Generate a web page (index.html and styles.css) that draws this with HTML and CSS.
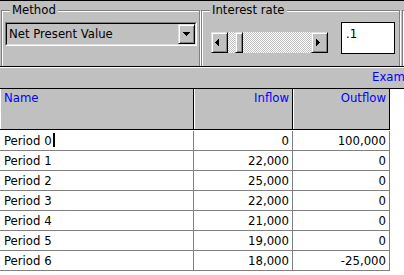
FILE: index.html
```html
<!DOCTYPE html>
<html>
<head>
<meta charset="utf-8">
<link rel="stylesheet" href="styles.css">
</head>
<body>
<div class="top">
  <div class="group g1">
    <span class="legend">Method</span>
    <div class="combo">
      <div class="combo-in">
        <span class="combo-text">Net Present Value</span>
        <span class="btn drop"><svg width="7" height="4" viewBox="0 0 7 4"><path d="M0 0h7v1h-1v1h-1v1h-1v1h-1v-1h-1v-1h-1v-1h-1z"/></svg></span>
      </div>
    </div>
  </div>
  <div class="group g2">
    <span class="legend">Interest rate</span>
    <div class="sb">
      <span class="btn sb-btn sb-left"><svg width="4" height="7" viewBox="0 0 4 7"><path d="M3 0h1v7h-1v-1h-1v-1h-1v-1h-1v-1h1v-1h1v-1h1z"/></svg></span>
      <div class="track"><span class="btn thumb"></span></div>
      <span class="btn sb-btn sb-right"><svg width="4" height="7" viewBox="0 0 4 7"><path d="M0 0h1v1h1v1h1v1h1v1h-1v1h-1v1h-1v1h-1z"/></svg></span>
    </div>
    <div class="tb">.1</div>
  </div>
  <div class="group g3"></div>
</div>
<div class="bar">Example</div>
<div class="grid">
  <div class="hdr">
    <div class="hc w1">Name</div>
    <div class="hc w2 r">Inflow</div>
    <div class="hc w3 r">Outflow</div>
  </div>
  <div class="rows">
    <div class="row"><div class="c w1">Period 0<span class="caret"></span></div><div class="c w2 r">0</div><div class="c w3 r">100,000</div></div>
    <div class="row"><div class="c w1">Period 1</div><div class="c w2 r">22,000</div><div class="c w3 r">0</div></div>
    <div class="row"><div class="c w1">Period 2</div><div class="c w2 r">25,000</div><div class="c w3 r">0</div></div>
    <div class="row"><div class="c w1">Period 3</div><div class="c w2 r">22,000</div><div class="c w3 r">0</div></div>
    <div class="row"><div class="c w1">Period 4</div><div class="c w2 r">21,000</div><div class="c w3 r">0</div></div>
    <div class="row"><div class="c w1">Period 5</div><div class="c w2 r">19,000</div><div class="c w3 r">0</div></div>
    <div class="row"><div class="c w1">Period 6</div><div class="c w2 r">18,000</div><div class="c w3 r">-25,000</div></div>
  </div>
</div>
</body>
</html>
```
FILE: styles.css
```css
* { box-sizing: border-box; }
html, body { margin: 0; padding: 0; }
body {
  width: 404px;
  height: 275px;
  overflow: hidden;
  background: #fff;
  font-family: "DejaVu Sans Condensed", "Liberation Sans", Arial, sans-serif;
  font-size: 13px;
  line-height: 16px;
  color: #000;
}

.top {
  height: 66px;
  background: #c0c0c0;
  border-top: 1px solid #000;
  display: flex;
  align-items: flex-start;
  padding: 9px 0 0 1px;
  overflow: hidden;
}

.group {
  position: relative;
  flex: none;
  height: 80px;
  border: 1px solid #808080;
  box-shadow: inset 1px 1px #fff, 1px 1px #fff;
}

.legend {
  position: absolute;
  left: 8px;
  top: -9px;
  padding: 0 2px;
  background: #c0c0c0;
  white-space: nowrap;
}

.g1 { width: 199px; padding: 11px 0 0 3px; }
.g2 { width: 199px; margin-left: 1px; padding: 0 0 0 9px; display: flex; align-items: flex-start; }
.g3 { width: 40px; margin-left: 2px; }

.combo {
  width: 192px;
  height: 24px;
  border: 1px solid;
  border-color: #808080 #fff #fff #808080;
}
.combo-in {
  height: 22px;
  display: flex;
  border: 1px solid;
  border-color: #000 #dfdfdf #dfdfdf #000;
}
.combo-text {
  flex: 1;
  padding-left: 2px;
  line-height: 20px;
  white-space: nowrap;
}

.btn {
  display: flex;
  align-items: center;
  justify-content: center;
  background: #c0c0c0;
  border: 1px solid;
  border-color: #dfdfdf #000 #000 #dfdfdf;
  box-shadow: inset 1px 1px #fff, inset -1px -1px #808080;
}
.btn svg { display: block; fill: #000; }
.drop { width: 17px; height: 20px; }

.sb {
  display: flex;
  width: 117px;
  height: 21px;
  margin-top: 21px;
}
.sb-btn { width: 17px; height: 21px; flex: none; justify-content: flex-start; }
.sb-left { padding-left: 3px; }
.sb-right { padding-left: 4px; }
.track {
  flex: 1;
  display: flex;
  background: repeating-conic-gradient(#fff 0 25%, #c0c0c0 0 50%) 0 0 / 2px 2px;
}
.thumb { width: 8px; height: 21px; margin-left: 7px; }

.tb {
  width: 54px;
  height: 32px;
  margin: 11px 0 0 13px;
  border: 1px solid #000;
  background: #fff;
  padding: 3px 0 0 4px;
}

.bar {
  height: 23px;
  background: #c0c0c0;
  border-top: 1px solid #000;
  border-bottom: 1px solid #000;
  box-shadow: inset 0 1px #fff;
  padding: 2px 0 0 372px;
  color: #00f;
  white-space: nowrap;
  overflow: hidden;
}

.hdr {
  display: flex;
  height: 41px;
}
.hc {
  background: #c0c0c0;
  border-right: 1px solid #000;
  border-bottom: 1px solid #000;
  box-shadow: inset 1px 0 #fff;
  color: #00f;
  padding: 1px 3px 0 4px;
  white-space: nowrap;
}
.w1 { width: 194px; }
.w2 { width: 99px; }
.w3 { width: 97px; }
.r { text-align: right; }

.rows { padding-top: 1px; }
.row { display: flex; height: 20px; }
.c {
  height: 20px;
  border-right: 1px solid #808080;
  border-bottom: 1px solid #808080;
  line-height: 19px;
  padding: 0 3px 0 4px;
  white-space: nowrap;
}
.caret {
  display: inline-block;
  width: 2px;
  height: 14px;
  background: #000;
  vertical-align: -2px;
  margin-left: 1px;
}
```
